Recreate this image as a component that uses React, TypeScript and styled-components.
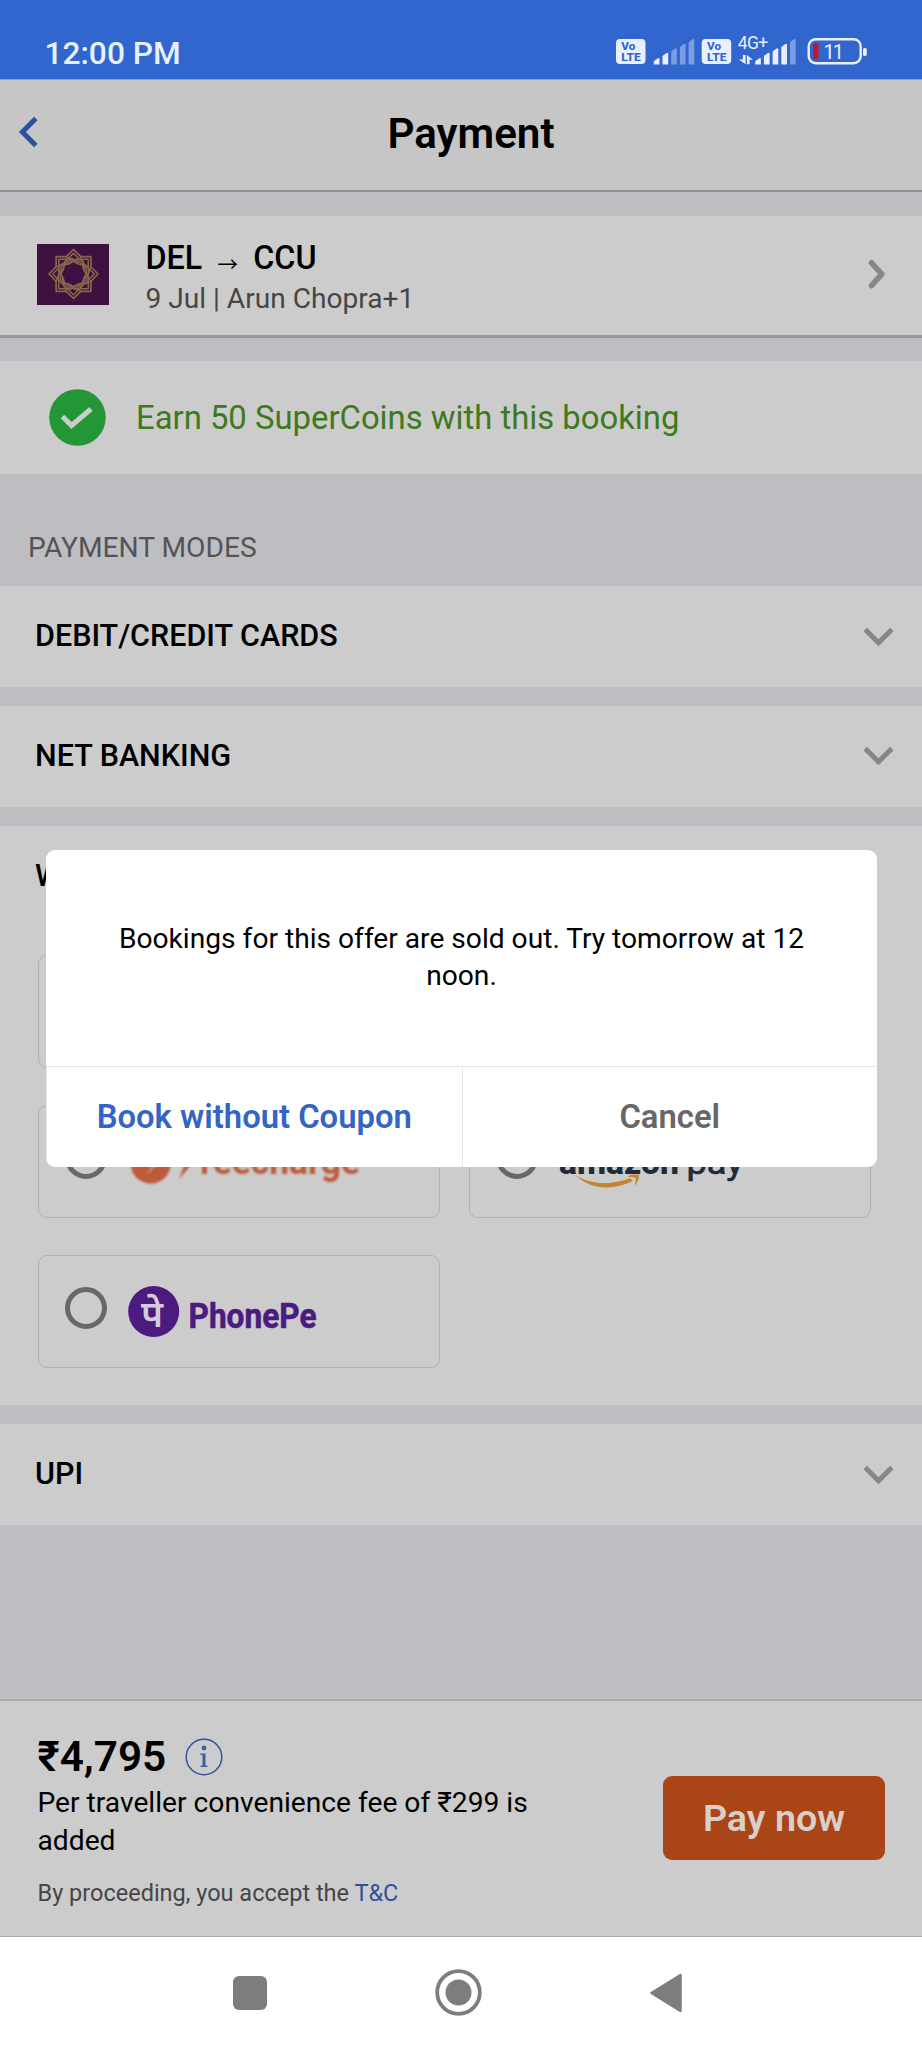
import React from "react";
import styled, { createGlobalStyle } from "styled-components";

const GlobalStyle = createGlobalStyle`
  * { box-sizing: border-box; }
  body { margin: 0; background: #bebdc2; }
  button { font: inherit; border: 0; margin: 0; padding: 0; background: none; }
`;

const Screen = styled.div`
  position: relative;
  width: 922px;
  height: 2048px;
  display: flex;
  flex-direction: column;
  background: #bebdc2;
  color: #000;
  font-family: Roboto, "Liberation Sans", sans-serif;
  overflow: hidden;
`;

const StatusBar = styled.header`
  height: 80px;
  flex: none;
  display: flex;
  justify-content: space-between;
  padding: 33px 55px 0 44.5px;
  background: #3166ce;
  border-bottom: 1px solid #83a3dc;
`;

const Clock = styled.span`
  font-size: 31.7px;
  font-weight: 500;
  line-height: 42px;
  color: #e6f0ff;
`;

const StatusIcons = styled.svg`
  display: block;
  width: 252px;
  height: 34px;
  font-family: Roboto, sans-serif;
`;

const TitleBar = styled.div`
  height: 112px;
  flex: none;
  display: grid;
  grid-template-columns: 60px 1fr 40px;
  align-items: center;
  background: #c6c6c6;
  border-bottom: 2px solid #929292;
`;

const BackButton = styled.button`
  display: flex;
  padding: 0 0 6px 18px;
`;

const Title = styled.h1`
  margin: 0;
  padding-bottom: 3px;
  font-size: 42.2px;
  font-weight: 600;
  line-height: 50px;
  text-align: center;
`;

const Trip = styled.section`
  height: 122px;
  margin-top: 24px;
  flex: none;
  display: flex;
  align-items: flex-start;
  padding: 28px 36px 0 37px;
  background: #ccc;
  border-bottom: 3px solid #999998;
`;

const TripText = styled.div`
  flex: 1;
  padding: 0 0 0 36.5px;
`;

const Route = styled.div`
  display: flex;
  align-items: center;
  height: 40px;
  margin-top: -6px;
  font-size: 32.3px;
  font-weight: 500;
  line-height: 40px;
`;

const Arrow = styled.span`
  width: 51px;
  padding-top: 10px;
  text-align: center;
  font-family: "Noto Sans CJK JP", sans-serif;
  font-size: 20.5px;
  font-weight: 400;
  line-height: 30px;
`;

const Passengers = styled.div`
  margin-top: 1px;
  font-size: 28.1px;
  line-height: 40px;
  color: #464646;
`;

const TripChevron = styled.svg`
  margin-top: 14px;
`;

const Reward = styled.section`
  height: 113px;
  margin-top: 23px;
  flex: none;
  display: flex;
  align-items: center;
  gap: 30px;
  padding-left: 49px;
  background: #ccc;
  color: #3c7a1c;
  font-size: 32.85px;
  line-height: 40px;
`;

const SectionLabel = styled.h2`
  height: 112px;
  margin: 0;
  flex: none;
  padding: 54px 0 0 28px;
  font-size: 28.2px;
  font-weight: 400;
  line-height: 40px;
  color: #545456;
`;

const Modes = styled.div`
  display: flex;
  flex-direction: column;
  gap: 18.5px;
`;

const Mode = styled.section`
  background: #ccc;
`;

const ModeHeader = styled.div`
  height: 101.3px;
  display: flex;
  align-items: center;
  justify-content: space-between;
  padding: 0 28px 0 35px;
  font-size: 30.5px;
  font-weight: 500;
`;

const ModeName = styled.span`
  padding-bottom: 2px;
`;

const WalletGrid = styled.div`
  display: grid;
  grid-template-columns: repeat(2, 402px);
  grid-auto-rows: 112.5px;
  gap: 37.5px 29px;
  padding: 28.3px 0 37.8px 38px;
`;

const WalletTile = styled.div`
  display: flex;
  align-items: center;
  gap: 21px;
  padding-left: 25.5px;
  border: 1.5px solid #b2b2b2;
  border-radius: 9px;
`;

const Radio = styled.span`
  width: 42px;
  height: 42px;
  margin-bottom: 6px;
  flex: none;
  border: 5px solid #686868;
  border-radius: 50%;
`;

const Logo = styled.svg`
  display: block;
  flex: none;
  overflow: visible;
  font-family: Roboto, sans-serif;
`;

const SoftLogo = styled(Logo)`
  filter: blur(0.9px);
`;

const Footer = styled.footer`
  height: 238px;
  margin-top: auto;
  flex: none;
  display: flex;
  justify-content: space-between;
  padding: 29px 37px 0 37.5px;
  background: #ccc;
  border-top: 2px solid #aaaaac;
  border-bottom: 1px solid #a8a8a8;
`;

const Fare = styled.div`
  width: 520px;
`;

const Price = styled.div`
  display: flex;
  align-items: center;
  gap: 18.5px;
  height: 52px;
  font-size: 42.3px;
  font-weight: 600;
`;

const InfoIcon = styled.svg`
  margin-top: 1px;
`;

const Fee = styled.p`
  margin: 2px 0 0;
  font-size: 28.2px;
  line-height: 37.5px;
`;

const Terms = styled.p`
  margin: 14px 0 0;
  font-size: 23.5px;
  line-height: 40px;
  color: #464646;
`;

const TermsLink = styled.a`
  color: #2c519f;
`;

const PayButton = styled.button`
  width: 222px;
  height: 84px;
  margin-top: 46px;
  border-radius: 9px;
  background: #aa4517;
  color: #d9cfca;
  font-size: 37.7px;
  font-weight: 600;
`;

const NavBar = styled.nav`
  height: 111px;
  flex: none;
  display: flex;
  align-items: center;
  justify-content: space-between;
  padding: 0 240px 0 233px;
  background: #fff;
`;

const Dialog = styled.div`
  position: absolute;
  top: 850px;
  left: 46px;
  width: 831px;
  height: 317px;
  display: flex;
  flex-direction: column;
  border-radius: 9px;
  background: #fff;
  overflow: hidden;
`;

const Message = styled.p`
  flex: 1;
  margin: 0;
  padding: 69.5px 60px 0;
  font-size: 28.17px;
  line-height: 37.5px;
  text-align: center;
`;

const DialogActions = styled.div`
  display: grid;
  grid-template-columns: 1fr 1fr;
  height: 101px;
  border-top: 1.5px solid #e4e4e4;
`;

const DialogButton = styled.button<{ $primary?: boolean }>`
  padding-bottom: 1px;
  border-left: 1.5px solid #e8e8e8;
  color: ${(p) => (p.$primary ? "#3565c4" : "#676767")};
  font-size: 32.8px;
  font-weight: 600;
`;

const VoLte = ({ x }: { x: number }) => (
  <g transform={`translate(${x} 6)`}>
    <rect width="29.5" height="25" rx="4" fill="#e8f0ff" />
    <g fill="#3166ce" fontWeight="800" fontSize="10.8">
      <text x="5.3" y="11.2" textLength="14" lengthAdjust="spacingAndGlyphs">Vo</text>
      <text x="5.3" y="22" textLength="19.5" lengthAdjust="spacingAndGlyphs">LTE</text>
    </g>
  </g>
);

const Signal = ({ x, level }: { x: number; level: number }) => (
  <g transform={`translate(${x} 6)`}>
    {[19.2, 14, 9.5, 5, 0.2].map((top, i) => (
      <path
        key={i}
        d={`M${i * 8.7} 25.5V${top + 3}L${i * 8.7 + 4} ${top}H${i * 8.7 + 5.7}V25.5Z`}
        fill={i < level ? "#e8f0ff" : "#7b9ee3"}
      />
    ))}
  </g>
);

const StatusGlyphs = () => (
  <StatusIcons viewBox="0 0 252 34">
    <VoLte x={1} />
    <Signal x={38.8} level={2} />
    <VoLte x={86.7} />
    <text x="122.8" y="15.8" fontSize="17.5" fill="#e8f0ff" textLength="30.5">4G+</text>
    <path d="M127.900 22H130.600V31.300L123.800 26.500H127.900ZM134.600 31.300H131.900V22L138 26.800H134.600Z" fill="#e8f0ff" />
    <Signal x={140.2} level={4} />
    <rect x="193.7" y="6.2" width="52" height="24" rx="7" fill="none" stroke="#e8f0ff" strokeWidth="2.4" />
    <rect x="198.3" y="10" width="5.2" height="16" rx="1.5" fill="#c3152c" />
    <text x="208.5" y="26.2" fontSize="20" fill="#e8f0ff" textLength="20.5">11</text>
    <rect x="248" y="15" width="3.8" height="8" rx="1.6" fill="#e8f0ff" />
  </StatusIcons>
);

const AirlineLogo = () => (
  <svg width="72" height="61" viewBox="0 0 72 61">
    <rect width="72" height="61" fill="#3d1140" />
    <g transform="translate(36.5 30)" fill="none" stroke="#8c664c" strokeLinejoin="round">
      {[0, 45, 90, 135, 180, 225, 270, 315].map((a) => (
        <g key={a} transform={`rotate(${a})`}>
          <path d="M-7.500 -17.200L0 -24.500L7.500 -17.200" strokeWidth="1.700" />
          <path d="M-9.500 -11.500L0 -20.800L9.500 -11.500L11.500 -4" strokeWidth="1.500" />
          <path d="M-4.300 -10.200L0 -12.800L4.300 -10.200" strokeWidth="1.600" />
          <path d="M-7.500 -17.200L4.500 -13.500L10.800 -8" strokeWidth="1.300" />
        </g>
      ))}
    </g>
  </svg>
);

const DownChevron = () => (
  <svg width="31" height="20" viewBox="0 0 31 20">
    <path d="M2.2 2.6L15.5 15.8L28.8 2.6" fill="none" stroke="#868686" strokeWidth="5" />
  </svg>
);

const FreechargeLogo = () => (
  <SoftLogo width="232" height="44" viewBox="0 0 232 44" fill="#bd5a3a">
    <circle cx="22.7" cy="24.5" r="20" />
    <path d="M27 13l-9 14h6l-6 10 13-14h-6l5-10z" fill="#cfa091" />
    <path d="M66 10l-6 15h4L51 40l5-13h-4l6-17z" />
    <text x="72" y="35.3" fontSize="36" fontWeight="700" textLength="160" lengthAdjust="spacingAndGlyphs">reecharge</text>
  </SoftLogo>
);

const AmazonPayLogo = () => (
  <Logo width="190" height="44" viewBox="0 0 190 44" fill="#202b35">
    <text x="0" y="34.5" fontSize="33" fontWeight="800" textLength="120" lengthAdjust="spacingAndGlyphs">amazon</text>
    <text x="127.5" y="34.5" fontSize="34" fontWeight="400" stroke="#202b35" strokeWidth="0.700" textLength="57" lengthAdjust="spacingAndGlyphs">pay</text>
    <path d="M17 36.5C33 46 53 46.5 71.5 39L73.5 42C54 52 31 50.500 17 36.5Z" fill="#c58330" />
    <path d="M68 37.500C72 35 77 35 80 36C80 40 78.500 44 75.500 47C76.500 43.500 77.500 41 76.500 39C74 37.500 71 38 68 37.500Z" fill="#c58330" />
  </Logo>
);

const HindiMark = styled.text`
  font-family: "Noto Sans", sans-serif;
  font-size: 37px;
  font-weight: 600;
`;

const PhonePeLogo = () => (
  <Logo width="190" height="52" viewBox="0 0 190 52" fill="#4b1b80">
    <circle cx="25.700" cy="26.500" r="25.500" />
    <HindiMark x="13" y="42" fill="#d4cbdc">पे</HindiMark>
    <text x="60.500" y="43" fontSize="35.500" fontWeight="700" stroke="#4b1b80" strokeWidth="0.600" strokeLinejoin="round" textLength="128" lengthAdjust="spacingAndGlyphs">PhonePe</text>
  </Logo>
);

export default function App() {
  return (
    <Screen>
      <GlobalStyle />
      <StatusBar>
        <Clock>12:00 PM</Clock>
        <StatusGlyphs />
      </StatusBar>

      <TitleBar>
        <BackButton aria-label="Back">
          <svg width="22" height="32" viewBox="0 0 22 32">
            <path d="M17.800 2.600L4.400 16L17.800 29.400" fill="none" stroke="#2c519f" strokeWidth="5" />
          </svg>
        </BackButton>
        <Title>Payment</Title>
      </TitleBar>

      <Trip>
        <AirlineLogo />
        <TripText>
          <Route>
            DEL<Arrow>→</Arrow>CCU
          </Route>
          <Passengers>9 Jul | Arun Chopra+1</Passengers>
        </TripText>
        <TripChevron width="18" height="32" viewBox="0 0 18 32">
          <path d="M3.500 4.800L13.800 16.200L3.500 27.600" fill="none" stroke="#868686" strokeWidth="5.600" strokeLinecap="round" strokeLinejoin="round" />
        </TripChevron>
      </Trip>

      <Reward>
        <svg width="57" height="57" viewBox="0 0 57 57">
          <circle cx="28.500" cy="28.500" r="28.300" fill="#239636" />
          <path d="M13.500 27.500L22.500 36.500L42 20" fill="none" stroke="#ccc" strokeWidth="5" />
        </svg>
        Earn 50 SuperCoins with this booking
      </Reward>

      <SectionLabel>PAYMENT MODES</SectionLabel>

      <Modes>
        <Mode>
          <ModeHeader><ModeName>DEBIT/CREDIT CARDS</ModeName><DownChevron /></ModeHeader>
        </Mode>
        <Mode>
          <ModeHeader><ModeName>NET BANKING</ModeName><DownChevron /></ModeHeader>
        </Mode>
        <Mode>
          <ModeHeader><ModeName>WALLETS</ModeName></ModeHeader>
          <WalletGrid>
            <WalletTile><Radio /></WalletTile>
            <WalletTile><Radio /></WalletTile>
            <WalletTile><Radio /><FreechargeLogo /></WalletTile>
            <WalletTile><Radio /><AmazonPayLogo /></WalletTile>
            <WalletTile><Radio /><PhonePeLogo /></WalletTile>
          </WalletGrid>
        </Mode>
        <Mode>
          <ModeHeader><ModeName>UPI</ModeName><DownChevron /></ModeHeader>
        </Mode>
      </Modes>

      <Footer>
        <Fare>
          <Price>
            ₹4,795
            <InfoIcon width="38" height="38" viewBox="0 0 38 38">
              <circle cx="19" cy="19" r="17.800" fill="none" stroke="#2f549f" strokeWidth="1.500" />
              <circle cx="19" cy="10" r="2.400" fill="#3a5fa8" />
              <path d="M15.500 15.500H20.500V27.500H22.500V29H15.500V27.500H17.500V17H15.500Z" fill="#3a5fa8" />
            </InfoIcon>
          </Price>
          <Fee>Per traveller convenience fee of ₹299 is added</Fee>
          <Terms>By proceeding, you accept the <TermsLink>T&amp;C</TermsLink></Terms>
        </Fare>
        <PayButton>Pay now</PayButton>
      </Footer>

      <NavBar>
        <svg width="34" height="34"><rect width="34" height="34" rx="6" fill="#7d7d7d" /></svg>
        <svg width="47" height="47" viewBox="0 0 47 47">
          <circle cx="23.500" cy="23.500" r="21.300" fill="none" stroke="#7d7d7d" strokeWidth="3.800" />
          <circle cx="23.500" cy="23.500" r="13" fill="#7d7d7d" />
        </svg>
        <svg width="32" height="40" viewBox="0 0 32 40">
          <path d="M1.500 20L30.500 2V38Z" fill="#7d7d7d" stroke="#7d7d7d" strokeWidth="2.500" strokeLinejoin="round" />
        </svg>
      </NavBar>

      <Dialog role="dialog">
        <Message>Bookings for this offer are sold out. Try tomorrow at 12 noon.</Message>
        <DialogActions>
          <DialogButton $primary>Book without Coupon</DialogButton>
          <DialogButton>Cancel</DialogButton>
        </DialogActions>
      </Dialog>
    </Screen>
  );
}
